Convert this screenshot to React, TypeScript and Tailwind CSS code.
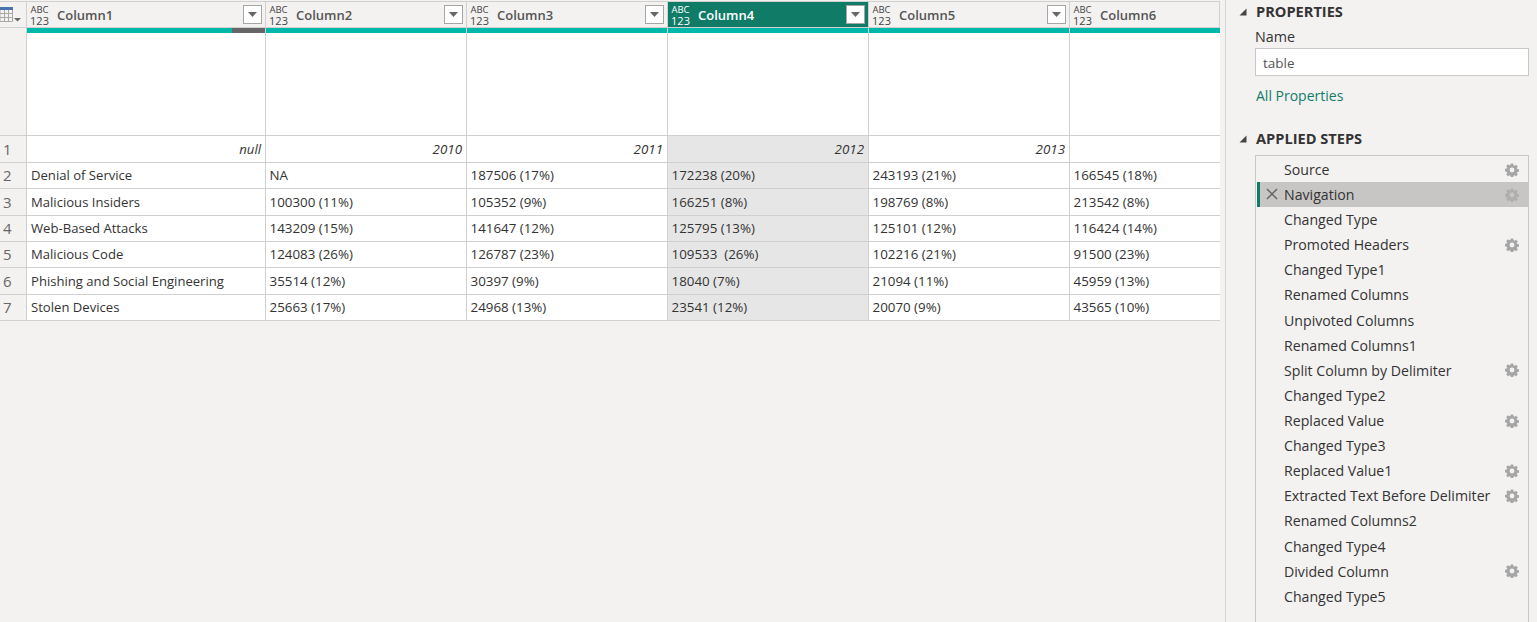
import React from "react";

const font = { fontFamily: '"Open Sans", "Noto Sans", sans-serif' };

const rows: string[][] = [
  ["null", "2010", "2011", "2012", "2013", ""],
  ["Denial of Service", "NA", "187506 (17%)", "172238 (20%)", "243193 (21%)", "166545 (18%)"],
  ["Malicious Insiders", "100300 (11%)", "105352 (9%)", "166251 (8%)", "198769 (8%)", "213542 (8%)"],
  ["Web-Based Attacks", "143209 (15%)", "141647 (12%)", "125795 (13%)", "125101 (12%)", "116424 (14%)"],
  ["Malicious Code", "124083 (26%)", "126787 (23%)", "109533  (26%)", "102216 (21%)", "91500 (23%)"],
  ["Phishing and Social Engineering", "35514 (12%)", "30397 (9%)", "18040 (7%)", "21094 (11%)", "45959 (13%)"],
  ["Stolen Devices", "25663 (17%)", "24968 (13%)", "23541 (12%)", "20070 (9%)", "43565 (10%)"],
];

const rowHeights = ["h-[27px]", "h-[26px]", "h-[27px]", "h-[26px]", "h-[26px]", "h-[27px]", "h-[26px]"];

const steps: [string, boolean][] = [
  ["Source", true],
  ["Navigation", true],
  ["Changed Type", false],
  ["Promoted Headers", true],
  ["Changed Type1", false],
  ["Renamed Columns", false],
  ["Unpivoted Columns", false],
  ["Renamed Columns1", false],
  ["Split Column by Delimiter", true],
  ["Changed Type2", false],
  ["Replaced Value", true],
  ["Changed Type3", false],
  ["Replaced Value1", true],
  ["Extracted Text Before Delimiter", true],
  ["Renamed Columns2", false],
  ["Changed Type4", false],
  ["Divided Column", true],
  ["Changed Type5", false],
];

const grid = "grid grid-cols-[27px_239px_201px_201px_201px_201px_150px]";

function Gear({ dim }: { dim?: boolean }) {
  return (
    <svg viewBox="0 0 14 14" className="w-[14px] h-[14px]">
      <path
        fillRule="evenodd"
        fill={dim ? "#b0afad" : "#a6a6a6"}
        d="M5.8 0.5h2.4l.35 1.75 1.05.45 1.5-1 1.7 1.7-1 1.5.45 1.05 1.75.35v2.4l-1.75.35-.45 1.05 1 1.5-1.7 1.7-1.5-1-1.05.45-.35 1.75H5.8l-.35-1.75-1.05-.45-1.5 1-1.7-1.7 1-1.5-.45-1.05L0 8.2V5.8l1.75-.35.45-1.05-1-1.5 1.7-1.7 1.5 1 1.05-.45zM7 4.6a2.4 2.4 0 1 0 0 4.8 2.4 2.4 0 0 0 0-4.8z"
      />
    </svg>
  );
}

function Triangle() {
  return (
    <svg viewBox="0 0 8 8" className="w-[8px] h-[8px]">
      <path d="M7.5 0.5v7h-7z" fill="#444444" />
    </svg>
  );
}

function TypeIcon({ active }: { active?: boolean }) {
  return (
    <div className={`flex flex-col items-center w-[19px] pt-[1px] leading-none ${active ? "text-white" : "text-[#444444]"}`}>
      <span className="text-[9.5px] leading-[10px]">ABC</span>
      <span className="text-[11px] leading-[11px]">123</span>
    </div>
  );
}

function Filter() {
  return (
    <div className="w-[19px] h-[19px] bg-white border border-[#a6a6a6] flex items-center justify-center">
      <svg viewBox="0 0 9 5" className="w-[9px] h-[5px]">
        <path d="M0 0h9L4.5 5z" fill="#666666" />
      </svg>
    </div>
  );
}

function TableIcon() {
  return (
    <svg viewBox="0 0 22 15" className="w-[22px] h-[15px] shrink-0">
      <rect x="0" y="0" width="13" height="3" fill="#4a72ac" />
      <path d="M0 3v11.5h12.5V3M0 6.5h12.5M0 10.5h12.5M4.5 3v11.5M8.5 3v11.5" stroke="#a8a8a8" strokeWidth="1" fill="none" />
      <path d="M14 11h7l-3.5 3.5z" fill="#666666" />
    </svg>
  );
}

export default function App() {
  return (
    <div style={font} className="w-[1537px] h-[622px] overflow-hidden bg-[#f3f2f1] flex text-[#333333]">
      {/* Data grid */}
      <div className="w-[1226px] pr-[5px] flex flex-col pt-px border-r border-[#d6d6d6]">
        <div className="border-t border-[#d0d0d0]" />
        <div className={`${grid} h-[26px] border-b border-[#d0d0d0]`}>
          <div className="border-r border-[#d0d0d0] flex items-start pt-[5px] overflow-hidden">
            <TableIcon />
          </div>
          {[1, 2, 3, 4, 5, 6].map((n) => {
            const active = n === 4;
            return (
              <div
                key={n}
                className={`flex items-center pl-[3px] pr-[3px] border-r border-[#d0d0d0] ${active ? "bg-[#107c68]" : ""}`}
              >
                <TypeIcon active={active} />
                <span
                  className={`ml-[8px] pt-[2px] text-[13px] font-semibold flex-1 ${active ? "text-white" : "text-[#555555]"}`}
                >
                  Column{n}
                </span>
                {n !== 6 && <Filter />}
              </div>
            );
          })}
        </div>
        <div className={`${grid} h-[108px] border-b border-[#d0d0d0]`}>
          <div className="border-r border-[#d0d0d0]" />
          {[1, 2, 3, 4, 5, 6].map((n) => (
            <div key={n} className="bg-white border-r border-[#d0d0d0] last:border-r-0">
              <div className="h-[5px] bg-[#00b8a9] flex justify-end">
                {n === 1 && <div className="w-[33px] bg-[#666666]" />}
              </div>
            </div>
          ))}
        </div>
        {rows.map((row, i) => (
          <div key={i} className={`${grid} ${rowHeights[i]} border-b border-[#d0d0d0]`}>
            <div className="border-r border-[#d0d0d0] pl-[3px] flex items-center text-[15px] text-[#666666]">{i + 1}</div>
            {row.map((cell, j) => (
              <div
                key={j}
                className={`flex items-center border-r border-[#d0d0d0] last:border-r-0 whitespace-pre text-[#333333] ${
                  j === 0 ? "text-[13.1px] px-[4px]" : "text-[13.35px] pl-[3.5px] pr-[4px]"
                } ${j === 0 || i === 0 ? "pt-[1px]" : ""} ${j === 3 ? "bg-[#e6e6e6]" : "bg-white"} ${
                  i === 0 ? "italic justify-end" : ""
                }`}
              >
                {cell}
              </div>
            ))}
          </div>
        ))}
      </div>

      {/* Query settings */}
      <div className="flex-1 pl-[29px] pr-[8px] flex flex-col">
        <div className="relative h-[24px] flex items-center font-bold text-[14.6px] text-[#333333]">
          <div className="absolute -left-[16px] top-[8px]">
            <Triangle />
          </div>
          <span className="ml-px">PROPERTIES</span>
        </div>
        <div className="mt-[3px] text-[14.3px] leading-[20px]">Name</div>
        <div className="mt-[1px] h-[28px] w-[274px] bg-white border border-[#c8c8c8] flex items-center pl-[7px] pt-[3px] text-[13.5px] text-[#555555]">
          table
        </div>
        <div className="mt-[9px] ml-px text-[14px] leading-[22px] text-[#107c68]">All Properties</div>
        <div className="relative mt-[21px] h-[22px] flex items-center font-bold text-[14.6px] text-[#333333]">
          <div className="absolute -left-[16px] top-[7px]">
            <Triangle />
          </div>
          <span className="ml-px">APPLIED STEPS</span>
        </div>
        <div className="mt-[5px] flex-1 w-[274px] border border-b-0 border-[#c8c8c8] pt-[1px] pl-px">
          {steps.map(([name, gear]) => {
            const sel = name === "Navigation";
            return (
              <div
                key={name}
                className={`relative h-[25.12px] flex items-center pl-[27px] pr-[9px] text-[14.15px] text-[#333333] ${sel ? "bg-[#c8c6c4]" : ""}`}
              >
                {sel && <div className="absolute left-0 top-0 bottom-0 w-[3px] bg-[#107c68]" />}
                {sel && (
                  <svg viewBox="0 0 12 12" className="absolute left-[9px] top-[6px] w-[12px] h-[12px]">
                    <path d="M1 1l10 10M11 1L1 11" stroke="#666666" strokeWidth="1.5" />
                  </svg>
                )}
                <span className="flex-1 whitespace-nowrap">{name}</span>
                {gear && <Gear dim={sel} />}
              </div>
            );
          })}
        </div>
      </div>
    </div>
  );
}
